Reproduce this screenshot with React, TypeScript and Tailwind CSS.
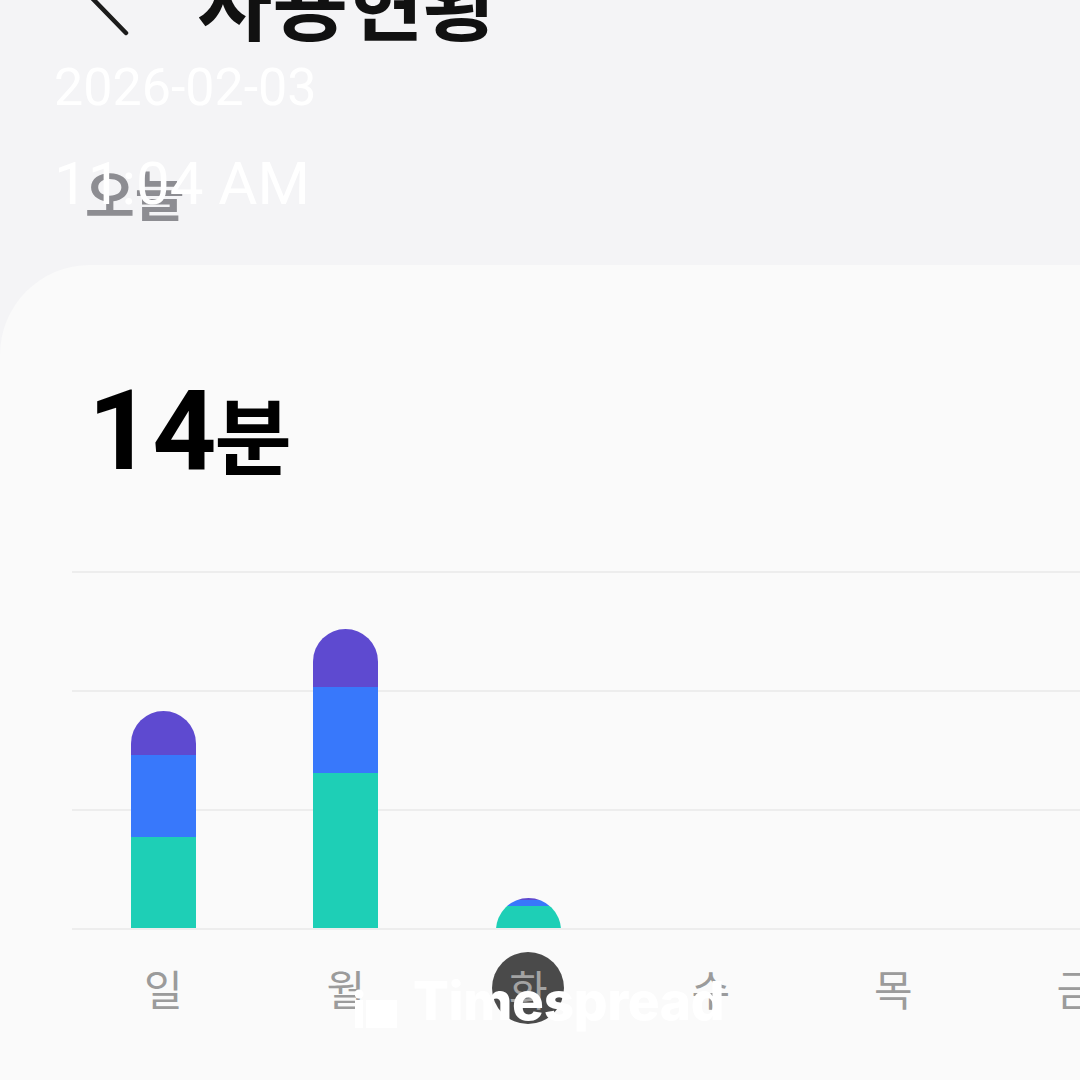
import React from "react";

type Day = {
  label: string;
  teal: number;
  blue: number;
  purple: number;
  today?: boolean;
};

const days: Day[] = [
  { label: "일", teal: 91, blue: 82, purple: 44 },
  { label: "월", teal: 155, blue: 86, purple: 58 },
  { label: "화", teal: 22, blue: 6, purple: 2, today: true },
  { label: "수", teal: 0, blue: 0, purple: 0 },
  { label: "목", teal: 0, blue: 0, purple: 0 },
  { label: "금", teal: 0, blue: 0, purple: 0 },
  { label: "토", teal: 0, blue: 0, purple: 0 },
];

const kr = "font-['Noto_Sans_CJK_KR',sans-serif]";

function Bar({ day }: { day: Day }) {
  const total = day.teal + day.blue + day.purple;
  if (!total) return null;
  return (
    <div className="w-[65px] overflow-hidden" style={{ height: total }}>
      <div
        className="flex w-full flex-col overflow-hidden rounded-t-[32.5px]"
        style={{ height: Math.max(total, 33) }}
      >
        <div className="bg-[#5e4ad0]" style={{ height: day.purple }} />
        <div className="bg-[#3878fb]" style={{ height: day.blue }} />
        <div className="flex-1 bg-[#1ecfb6]" />
      </div>
    </div>
  );
}

export default function App() {
  return (
    <div className="relative flex h-[1080px] w-[1080px] flex-col overflow-hidden bg-[#f4f4f6]">
      {/* header */}
      <div className="flex h-[265px] shrink-0 flex-col">
        <div className="-mt-[40px] flex items-start pl-[80px]">
          <svg width="60" height="80" viewBox="0 0 60 80" fill="none">
            <polyline
              points="46,3 12,38 46,73"
              stroke="#1c1c1c"
              strokeWidth="4.5"
              strokeLinecap="round"
              strokeLinejoin="round"
            />
          </svg>
          <h1
            className={`ml-[57px] mt-[-2px] text-[82px] font-bold leading-none text-[#111] ${kr}`}
          >
            사용현황
          </h1>
        </div>
        <div
          className={`ml-[85px] mt-[127px] text-[54px] font-bold leading-none text-[#8d8d92] ${kr}`}
        >
          오늘
        </div>
      </div>

      {/* card */}
      <div className="flex-1 rounded-tl-[90px] bg-[#fafafa]">
        <div className="flex items-baseline pl-[88px] pt-[110px]">
          <span className="font-['Roboto',sans-serif] text-[112px] font-bold leading-none text-black">
            14
          </span>
          <span className={`-ml-[2px] text-[84px] font-bold leading-none text-black ${kr}`}>분</span>
        </div>

        <div className="relative ml-[72px] mt-[84px]">
          <div className="h-[119px] border-t-2 border-[#ededed]" />
          <div className="h-[119px] border-t-2 border-[#ededed]" />
          <div className="h-[121px] border-y-2 border-[#ededed]" />
          <div className="absolute inset-x-0 bottom-[2px] flex items-end">
            {days.map((d) => (
              <div key={d.label} className="flex w-[182.5px] shrink-0 justify-center">
                <Bar day={d} />
              </div>
            ))}
          </div>
        </div>

        <div className="ml-[72px] mt-[22px] flex">
          {days.map((d) => (
            <div key={d.label} className="flex w-[182.5px] shrink-0 justify-center">
              <div
                className={`flex h-[72px] w-[72px] items-center justify-center rounded-full text-[42px] leading-none ${kr} ${
                  d.today ? "bg-[#4a4a4a] text-[#a3a3a3]" : "text-[#9b9b9b]"
                }`}
              >
                {d.label}
              </div>
            </div>
          ))}
        </div>
      </div>

      {/* date stamp overlay */}
      <div className="absolute left-[54px] top-[62px] font-['Roboto',sans-serif] text-white">
        <div className="text-[52px] leading-none">2026-02-03</div>
        <div className="mt-[40px] text-[60px] leading-none">11:04 AM</div>
      </div>

      {/* watermark */}
      <div className="absolute left-[355px] top-[975px] flex items-end gap-[16px]">
        <svg width="42" height="46" viewBox="0 0 42 46" fill="#fff">
          <circle cx="4" cy="12" r="4.5" />
          <rect x="0" y="18" width="8" height="28" />
          <rect x="11" y="18" width="31" height="28" />
        </svg>
        <span className="font-['Inter',sans-serif] text-[53px] font-extrabold leading-none tracking-[-0.3px] text-white">
          Timespread
        </span>
      </div>
    </div>
  );
}
